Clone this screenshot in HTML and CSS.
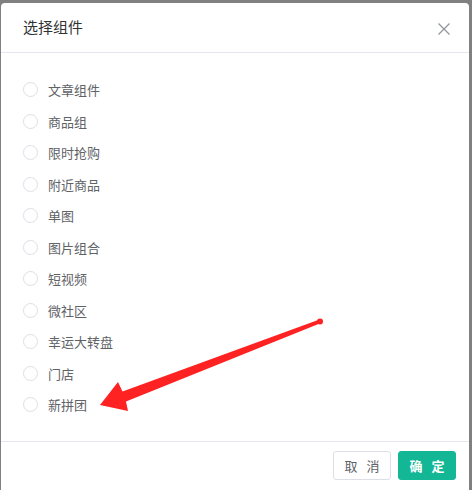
FILE: index.html
```html
<!DOCTYPE html>
<html lang="zh">
<head>
<meta charset="utf-8">
<link rel="stylesheet" href="styles.css">
</head>
<body>
<div class="modal">
  <div class="modal-header">
    <span class="modal-title">选择组件</span>
    <svg class="close" width="12" height="12" viewBox="0 0 12 12"><path d="M0.5 0.5L11.5 11.5M11.5 0.5L0.5 11.5" stroke="#909399" stroke-width="1.2" fill="none"/></svg>
  </div>
  <div class="modal-body">
    <ul class="options">
      <li class="option"><span class="radio"></span><span class="label">文章组件</span></li>
      <li class="option"><span class="radio"></span><span class="label">商品组</span></li>
      <li class="option"><span class="radio"></span><span class="label">限时抢购</span></li>
      <li class="option"><span class="radio"></span><span class="label">附近商品</span></li>
      <li class="option"><span class="radio"></span><span class="label">单图</span></li>
      <li class="option"><span class="radio"></span><span class="label">图片组合</span></li>
      <li class="option"><span class="radio"></span><span class="label">短视频</span></li>
      <li class="option"><span class="radio"></span><span class="label">微社区</span></li>
      <li class="option"><span class="radio"></span><span class="label">幸运大转盘</span></li>
      <li class="option"><span class="radio"></span><span class="label">门店</span></li>
      <li class="option"><span class="radio"></span><span class="label">新拼团</span></li>
    </ul>
  </div>
  <div class="modal-footer">
    <button class="btn btn-default">取 消</button>
    <button class="btn btn-primary">确 定</button>
  </div>
  <svg class="arrow" width="472" height="490" viewBox="0 0 472 490">
    <polygon points="321.5,318.8 318.5,324 126,401.5 128,411 100,405 118,382 122.5,391.5" fill="#ff2222"/>
    <circle cx="320" cy="321.4" r="3" fill="#ff2222"/>
  </svg>
</div>
</body>
</html>
```

FILE: styles.css
```css
* { box-sizing: border-box; }
html, body { margin: 0; padding: 0; }
body {
  width: 472px;
  height: 490px;
  overflow: hidden;
  background: #808080;
  padding: 3px 3px 0 1px;
  font-family: "Noto Sans CJK SC", "Liberation Sans", sans-serif;
}
.modal {
  position: relative;
  background: #fff;
  border-radius: 4px;
  height: 492px;
  display: flex;
  flex-direction: column;
}
.modal-header {
  height: 50px;
  border-bottom: 1px solid #e4e7ed;
  display: flex;
  align-items: center;
  justify-content: space-between;
  padding: 0 19px 0 22px;
  flex: none;
}
.modal-title {
  font-size: 15px;
  color: #303133;
  margin-top: -2px;
}
.close { display: block; margin-top: 2px; }
.modal-body {
  padding: 21px 0 20px 22px;
  flex: none;
}
.options {
  list-style: none;
  margin: 0;
  padding: 0;
}
.option {
  height: 31.5px;
  display: flex;
  align-items: center;
}
.radio {
  width: 15px;
  height: 15px;
  border: 1px solid #dcdfe6;
  border-radius: 50%;
  margin-right: 10px;
  flex: none;
}
.label {
  font-size: 13px;
  color: #606266;
}
.modal-footer {
  border-top: 1px solid #e4e7ed;
  display: flex;
  justify-content: flex-end;
  gap: 7px;
  padding: 9px 13px 0 0;
}
.btn {
  height: 29px;
  width: 58px;
  border-radius: 3px;
  font-family: inherit;
  font-size: 13px;
  letter-spacing: 3px;
  padding: 0 0 0 3px;
  cursor: pointer;
}
.btn-default {
  background: #fff;
  border: 1px solid #dcdfe6;
  color: #606266;
}
.btn-primary {
  background: #13b795;
  border: 1px solid #13b795;
  color: #fff;
  font-weight: bold;
}
.arrow {
  position: absolute;
  left: -1px;
  top: -3px;
  pointer-events: none;
}
```
